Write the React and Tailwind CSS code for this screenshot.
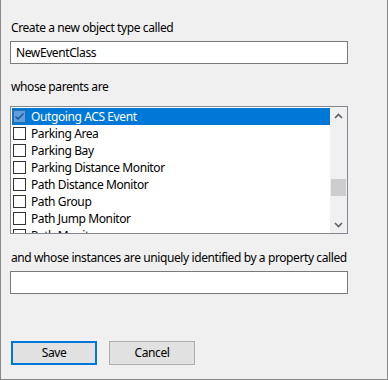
import React from "react";

const items = [
  { label: "Outgoing ACS Event", checked: true, selected: true },
  { label: "Parking Area" },
  { label: "Parking Bay" },
  { label: "Parking Distance Monitor" },
  { label: "Path Distance Monitor" },
  { label: "Path Group" },
  { label: "Path Jump Monitor" },
  { label: "Path Monitor" },
];

function Check({ checked }) {
  if (checked) {
    return (
      <div className="w-[13px] h-[13px] shrink-0 border border-[#2f6aa8] bg-[#5f9fe0] flex items-center justify-center">
        <svg width="11" height="11" viewBox="0 0 11 11">
          <path d="M1.5 5.5 L4 8 L9.5 2.5" fill="none" stroke="#1d5593" strokeWidth="1.5" />
        </svg>
      </div>
    );
  }
  return <div className="w-[13px] h-[13px] shrink-0 border border-[#333] bg-white" />;
}

export default function App() {
  return (
    <div
      className="w-[388px] h-[380px] bg-[#f0f0f0] border-l border-r border-b border-[#8a8a8a] text-[12px] tracking-[-0.4px] text-black flex flex-col pl-[9px] pr-[39px]"
      style={{ fontFamily: '"Noto Sans", "Open Sans", sans-serif' }}
    >
      <div className="mt-[20px] h-[16px] leading-[16px] pl-[1px]">Create a new object type called</div>
      <div className="mt-[5px] h-[23px] border border-[#7a7a7a] bg-white flex items-center pl-[5px] leading-[16px]">
        NewEventClass
      </div>
      <div className="mt-[15px] h-[16px] leading-[16px] pl-[1px]">whose parents are</div>
      <div className="mt-[11px] h-[128px] border border-[#828790] bg-white flex">
        <div className="flex-1 overflow-hidden pl-[1px] pt-[1px]">
          {items.map((it, i) => (
            <div
              key={i}
              className={
                "h-[17px] flex items-center gap-[5px] pl-[1px] whitespace-nowrap leading-[16px] " +
                (it.selected ? "bg-[#0078d7] text-white" : "")
              }
            >
              <Check checked={it.checked} />
              <span>{it.label}</span>
            </div>
          ))}
        </div>
        <div className="w-[17px] bg-[#f0f0f0] flex flex-col">
          <div className="h-[17px] flex items-center justify-center">
            <svg width="9" height="6" viewBox="0 0 9 6">
              <path d="M1 5 L4.5 1.5 L8 5" fill="none" stroke="#606060" strokeWidth="1.6" />
            </svg>
          </div>
          <div className="flex-1 flex flex-col">
            <div className="h-[55px]" />
            <div className="h-[17px] mx-[1px] bg-[#cdcdcd]" />
          </div>
          <div className="h-[17px] flex items-center justify-center">
            <svg width="9" height="6" viewBox="0 0 9 6">
              <path d="M1 1 L4.5 4.5 L8 1" fill="none" stroke="#606060" strokeWidth="1.6" />
            </svg>
          </div>
        </div>
      </div>
      <div className="mt-[16px] h-[16px] leading-[16px] pl-[1px] whitespace-nowrap">
        and whose instances are uniquely identified by a property called
      </div>
      <div className="mt-[5px] h-[23px] border border-[#7a7a7a] bg-white" />
      <div className="mt-[47px] flex gap-[12px] pl-[1px]">
        <button className="w-[86px] h-[24px] border-2 border-[#0078d7] bg-[#e1e1e1] leading-[16px]">Save</button>
        <button className="w-[86px] h-[24px] border border-[#adadad] bg-[#e1e1e1] leading-[16px]">Cancel</button>
      </div>
    </div>
  );
}
